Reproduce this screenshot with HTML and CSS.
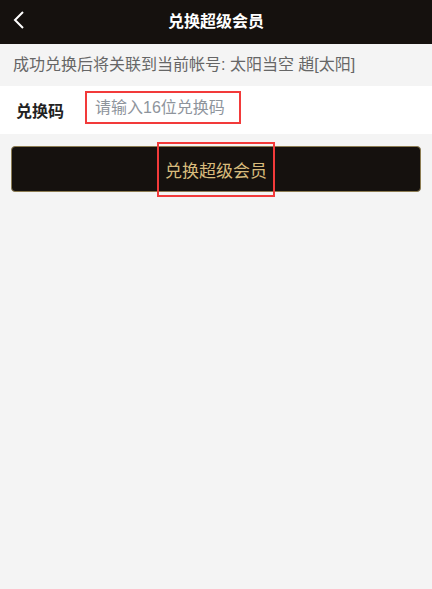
FILE: index.html
```html
<!DOCTYPE html>
<html lang="zh-CN">
<head>
    <meta charset="UTF-8">
    <meta name="viewport" content="width=device-width, initial-scale=1.0">
    <title>兑换超级会员</title>
    <link rel="stylesheet" href="styles.css">
</head>
<body>
<div class="app">
    <header class="top-bar">
        <a class="back-button" href="#">
            <svg width="12" height="18" viewBox="0 0 12 18">
                <polyline points="10,1 2,9 10,17" fill="none" stroke="#fff" stroke-width="2"/>
            </svg>
        </a>
        <h1>兑换超级会员</h1>
    </header>

    <div class="account-tip">成功兑换后将关联到当前帐号: 太阳当空 趙[太阳]</div>

    <div class="code-row">
        <label class="code-label" for="code-input">兑换码</label>
        <input type="text" id="code-input" class="code-input" placeholder="请输入16位兑换码">
    </div>

    <div class="action">
        <button class="redeem-button"><span class="redeem-text">兑换超级会员</span></button>
    </div>
</div>
</body>
</html>
```

FILE: styles.css
```css
:root {
    --dark: #15110e;
    --gold: #d8bb7c;
    --gold-border: #8c7c52;
    --mark: #f23a3a;
}

body {
    margin: 0;
    padding: 0;
    background-color: #f4f4f4;
    font-family: "Liberation Sans", "Noto Sans CJK SC", sans-serif;
}

.app {
    width: 432px;
    min-height: 589px;
}

.top-bar {
    position: relative;
    height: 44px;
    background: var(--dark);
    display: flex;
    align-items: center;
    justify-content: center;
}

.top-bar h1 {
    margin: 0;
    color: white;
    font-size: 16px;
    font-weight: bold;
    line-height: 20px;
}

.back-button {
    position: absolute;
    left: 13px;
    top: 11px;
    display: block;
    line-height: 0;
}

.account-tip {
    height: 42px;
    line-height: 42px;
    padding-left: 13px;
    font-size: 16px;
    color: #666;
    white-space: nowrap;
}

.code-row {
    height: 48px;
    background: white;
    display: flex;
    align-items: center;
}

.code-label {
    width: 69px;
    padding-left: 16px;
    font-size: 16px;
    font-weight: bold;
    color: #222;
}

.code-input {
    width: 156px;
    height: 33px;
    box-sizing: border-box;
    border: 2px solid var(--mark);
    padding: 0 0 0 8px;
    margin-top: -5px;
    font-family: inherit;
    font-size: 16px;
    color: #333;
    outline: none;
}

.code-input::placeholder {
    color: #8e949c;
}

.action {
    padding: 12px 11px;
}

.redeem-button {
    width: 100%;
    height: 46px;
    display: flex;
    align-items: center;
    justify-content: center;
    background: var(--dark);
    border: 1px solid var(--gold-border);
    border-radius: 4px;
    padding: 0;
    cursor: pointer;
}

.redeem-text {
    display: block;
    flex-shrink: 0;
    height: 55px;
    line-height: 55px;
    box-sizing: border-box;
    border: 2px solid var(--mark);
    padding: 0 6px;
    font-family: "Liberation Sans", "Noto Sans CJK SC", sans-serif;
    font-size: 17px;
    color: var(--gold);
}
```
